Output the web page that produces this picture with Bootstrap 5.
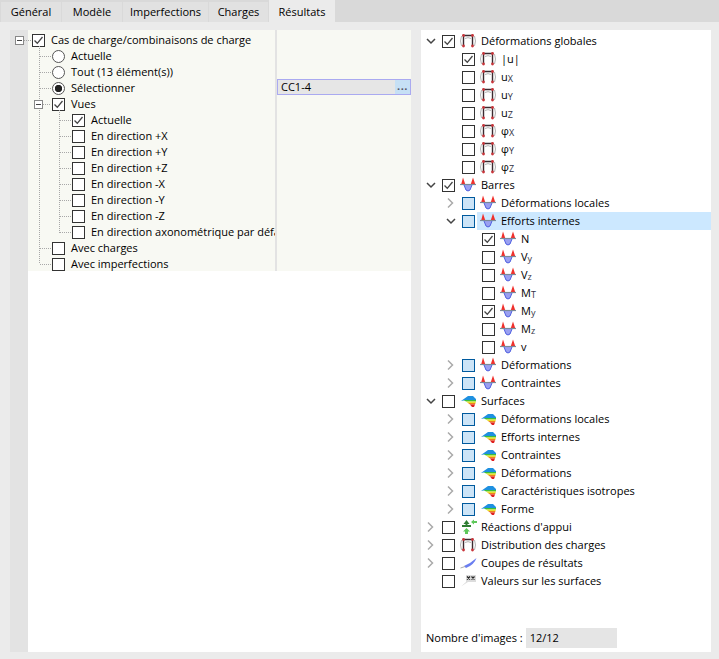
<!DOCTYPE html>
<html lang="fr">
<head>
<meta charset="UTF-8">
<title>Résultats</title>
<link href="https://cdn.jsdelivr.net/npm/bootstrap@5.3.3/dist/css/bootstrap.min.css" rel="stylesheet">
<style>
  html, body { height: 659px; overflow: hidden; }
  body { background: #ebebeb; color: #000; font: 11px/16px "Open Sans", "Noto Sans", sans-serif; }
  .tabbar { height: 22px; background: #d9d9d9; padding-left: 1px; gap: 1px; }
  .tabbar div { width: 60px; height: 20px; margin-top: 2px; line-height: 19px; text-align: center; background: #e1e1e1; }
  .tabbar div:nth-child(3) { width: 85px; }
  .tabbar div:nth-child(4) { width: 59px; }
  .tabbar div.active { width: 66px; height: 22px; margin-top: 0; line-height: 23px; background: #ebebeb; }
  .panels { height: 622px; margin: 8px 8px 0 10px; gap: 10px; }
  .left { width: 401px; background: #fff; position: relative; }
  .gutter { width: 18px; background: #e3e3e3; }
  .props { height: 241px; background: #f8f9f3; }
  .names { width: 249px; border-right: 2px solid #e3e3e3; overflow: hidden; padding-top: 2px; }
  .values { padding-top: 49px; flex: 1; }
  .combo { height: 16px; line-height: 14px; background: #e6e6e6; border: 1px solid #aaaaf0; padding-left: 3px; }
  .combo span { width: 15px; background: #c6e0f5; line-height: 11px; text-align: center; letter-spacing: .5px; color: #556; font-weight: 700; }
  .lines { position: absolute; left: 0; top: 0; pointer-events: none; }
  .row-l { height: 16px; white-space: nowrap; }
  .row-l .t { margin-left: 6px; }
  .l1 { padding-left: 4px; }
  .l2 { padding-left: 24px; }
  .l3 { padding-left: 44px; }
  .ck { width: 13px; height: 13px; border: 1px solid #333; background: #fff; flex: none; }
  .ck svg { display: block; }
  .ck.part { background: #cce4f7; border-color: #005a9e; }
  .rd { width: 13px; height: 13px; border: 1px solid #555; border-radius: 50%; background: #fff; flex: none; }
  .rd.on { background: radial-gradient(circle, #222 3.4px, #fff 4px); }
  .right { flex: 1; background: #fff; padding-top: 2px; position: relative; }
  .row-r { height: 18px; white-space: nowrap; }
  .row-r .sel { height: 18px; background: #cce8ff; margin-left: 2px; }
  .sel .ico { margin-left: 3px; }
  .arr { width: 14px; flex: none; margin-right: 2px; }
  .i0 { padding-left: 5px; }
  .i1 { padding-left: 25px; }
  .i2 { padding-left: 45px; }
  .ico { width: 18px; height: 16px; flex: none; margin: 0 3px 0 5px; }
  sub { position: static; font-size: 9px; vertical-align: -1px; color: #334; }
  .count { position: absolute; left: 5px; top: 598px; gap: 3px; }
  .count div { width: 91px; height: 20px; background: #e5e5e5; line-height: 20px; padding-left: 4px; }
</style>
</head>
<body>
<svg width="0" height="0" class="position-absolute">
  <defs>
    <symbol id="frame" viewBox="0 0 18 16">
      <path d="M1.500 3Q-.5 8 1.500 13M14.500 3Q16.500 8 14.500 13M5 5.500Q8 3.800 11 5.500" fill="none" stroke="#b5b5b5"/>
      <path d="M3.500 13V2.500H12.500V13" fill="none" stroke="#3a2a30" stroke-width="1.400"/>
      <circle cx="3.500" cy="2.500" r="1.400" fill="#c8343a"/><circle cx="12.500" cy="2.500" r="1.400" fill="#c8343a"/>
      <circle cx="3.500" cy="13" r="1.400" fill="#c8343a"/><circle cx="12.500" cy="13" r="1.400" fill="#c8343a"/>
    </symbol>
    <symbol id="bar" viewBox="0 0 18 16">
      <path d="M1 8 3 .5 5.500 8ZM10.500 8 13 .5 15.500 8Z" fill="#f0302c"/>
      <path d="M4 8H12L10 13Q8 15 6 13Z" fill="#9aa0f0"/>
      <path d="M4 8 6 13Q8 15 10 13L12 8" fill="none" stroke="#4f5fe0"/>
      <path d="M0 7.500H16" stroke="#7a8a9a" stroke-width="1.200"/>
    </symbol>
    <symbol id="surf" viewBox="0 0 18 16">
      <path d="M1 8 8 3H13L16 6V7H6Z" fill="#1e90e0"/>
      <path d="M3.500 7H16V8.500H6Z" fill="#3ac03a"/>
      <path d="M6 8.500H16L15.500 10H8Z" fill="#e8e02a"/>
      <path d="M8 10H15.500L15 11.500H10Z" fill="#ee8020"/>
      <path d="M10 11.500H15L14 14H12Z" fill="#e02020"/>
    </symbol>
  </defs>
</svg>

<div class="tabbar d-flex">
  <div>Général</div><div>Modèle</div><div>Imperfections</div><div>Charges</div><div class="active">Résultats</div>
</div>

<div class="panels d-flex">
  <div class="left d-flex">
    <div class="gutter"></div>
    <div class="flex-fill">
      <div class="props d-flex">
        <div class="names" id="names"></div>
        <div class="values">
          <div class="combo d-flex justify-content-between">CC1-4<span>...</span></div>
        </div>
      </div>
    </div>
    <svg class="lines" width="100" height="250" viewBox="0 0 100 250" shape-rendering="crispEdges">
      <path id="dots" fill="none" stroke="#a8a8a8" stroke-dasharray="1 1"/>
      <g fill="#fff" stroke="#888">
        <rect x="5.500" y="6.500" width="8" height="8"/>
        <rect x="24.500" y="70.500" width="8" height="8"/>
      </g>
      <path d="M7 10.500H12M26 74.500H31" stroke="#444"/>
    </svg>
  </div>
  <div class="right" id="tree">
    <div class="count d-flex align-items-center">Nombre d'images :<div>12/12</div></div>
  </div>
</div>

<script>
  const check = '<svg width="11" height="11" viewBox="0 0 11 11"><path d="M1.500 5.500 4.300 8.300 9.500 2" fill="none" stroke="#444" stroke-width="1.300"/></svg>';

  // left tree: level, kind (c check, C checked, r radio, R radio on), label
  const leftRows = [
    [1, 'C', 'Cas de charge/combinaisons de charge'],
    [2, 'r', 'Actuelle'], [2, 'r', 'Tout (13 élément(s))'], [2, 'R', 'Sélectionner'],
    [2, 'C', 'Vues'],
    [3, 'C', 'Actuelle'], [3, 'c', 'En direction +X'], [3, 'c', 'En direction +Y'], [3, 'c', 'En direction +Z'],
    [3, 'c', 'En direction -X'], [3, 'c', 'En direction -Y'], [3, 'c', 'En direction -Z'],
    [3, 'c', 'En direction axonométrique par défaut'],
    [2, 'c', 'Avec charges'], [2, 'c', 'Avec imperfections']
  ];
  document.getElementById('names').innerHTML = leftRows.map(([lv, kind, label]) => {
    const mark = kind === 'r' || kind === 'R'
      ? `<span class="rd${kind === 'R' ? ' on' : ''}"></span>`
      : `<span class="ck">${kind === 'C' ? check : ''}</span>`;
    return `<div class="row-l d-flex align-items-center l${lv}">${mark}<span class="t">${label}</span></div>`;
  }).join('');

  // dotted connectors of the left tree
  let d = 'M14 10.500H21M29.500 16V234M33 74.500H41M49.500 80V202.500';
  [26, 42, 58, 218, 234].forEach(y => { d += `M30 ${y + .5}H41`; });
  for (let y = 90; y <= 202; y += 16) d += `M50 ${y + .5}H61`;
  document.getElementById('dots').setAttribute('d', d);

  const chev = {
    d: '<svg class="arr" width="14" height="10" viewBox="0 0 14 10"><path d="M1 3 5 7 9 3" fill="none" stroke="#444" stroke-width="1.500"/></svg>',
    r: '<svg class="arr" width="14" height="10" viewBox="0 0 14 10"><path d="M2 .5 6.500 5 2 9.500" fill="none" stroke="#aaa" stroke-width="1.500"/></svg>',
    n: '<span class="arr"></span>'
  };
  const ico = id => `<svg class="ico"><use href="#${id}"/></svg>`;
  const react = '<svg class="ico" viewBox="0 0 18 16"><path d="M6.500 1 9.500 5H7.500V6H11V8H2V6H5.500V5H3.500Z" fill="#2f7d32"/><path d="M6.500 9 10 12.500H8V15H5V12.500H3Z" fill="#5ec85a"/><path d="M11 3 14 .5V2H17V4H14V5.500Z" fill="#5ec85a"/></svg>';
  const cut = '<svg class="ico" viewBox="0 0 18 16"><path d="M4 11Q11 8 16.500 3 14 10 6 13Z" fill="#6a7ef0"/><path d="M.5 13 5 11.500" stroke="#aaa"/></svg>';
  const vals = '<svg class="ico" viewBox="0 0 18 16"><path d="M1 13.500 6 9V2H16V9H8Z" fill="#dcdcdc"/><path d="M7 3.500 10 6.500M10 3.500 7 6.500M11.500 3.500 14.500 6.500M14.500 3.500 11.500 6.500" stroke="#222" stroke-width="1.200"/></svg>';

  // right tree: indent, chevron, checkbox state, icon, label, selected
  const treeRows = [
    [0, 'd', 'C', 'frame', 'Déformations globales'],
    [1, 'n', 'C', 'frame', '|u|'],
    [1, 'n', 'c', 'frame', 'u<sub>X</sub>'], [1, 'n', 'c', 'frame', 'u<sub>Y</sub>'], [1, 'n', 'c', 'frame', 'u<sub>Z</sub>'],
    [1, 'n', 'c', 'frame', 'φ<sub>X</sub>'], [1, 'n', 'c', 'frame', 'φ<sub>Y</sub>'], [1, 'n', 'c', 'frame', 'φ<sub>Z</sub>'],
    [0, 'd', 'C', 'bar', 'Barres'],
    [1, 'r', 'p', 'bar', 'Déformations locales'],
    [1, 'd', 'p', 'bar', 'Efforts internes', true],
    [2, 'n', 'C', 'bar', 'N'],
    [2, 'n', 'c', 'bar', 'V<sub>y</sub>'], [2, 'n', 'c', 'bar', 'V<sub>z</sub>'], [2, 'n', 'c', 'bar', 'M<sub>T</sub>'],
    [2, 'n', 'C', 'bar', 'M<sub>y</sub>'], [2, 'n', 'c', 'bar', 'M<sub>z</sub>'], [2, 'n', 'c', 'bar', 'v'],
    [1, 'r', 'p', 'bar', 'Déformations'], [1, 'r', 'p', 'bar', 'Contraintes'],
    [0, 'd', 'c', 'surf', 'Surfaces'],
    [1, 'r', 'p', 'surf', 'Déformations locales'], [1, 'r', 'p', 'surf', 'Efforts internes'],
    [1, 'r', 'p', 'surf', 'Contraintes'], [1, 'r', 'p', 'surf', 'Déformations'],
    [1, 'r', 'p', 'surf', 'Caractéristiques isotropes'], [1, 'r', 'p', 'surf', 'Forme'],
    [0, 'r', 'c', react, 'Réactions d\'appui'],
    [0, 'r', 'c', 'frame', 'Distribution des charges'],
    [0, 'r', 'c', cut, 'Coupes de résultats'],
    [0, 'n', 'c', vals, 'Valeurs sur les surfaces']
  ];
  const tree = document.getElementById('tree');
  tree.insertAdjacentHTML('afterbegin', treeRows.map(([ind, ch, st, icon, label, sel]) => {
    const box = `<span class="ck${st === 'p' ? ' part' : ''}">${st === 'C' ? check : ''}</span>`;
    const pic = icon.startsWith('<') ? icon : ico(icon);
    const body = sel
      ? `<div class="sel d-flex align-items-center flex-fill">${pic}<span>${label}</span></div>`
      : `${pic}<span>${label}</span>`;
    return `<div class="row-r d-flex align-items-center i${ind}">${chev[ch]}${box}${body}</div>`;
  }).join(''));
</script>
<script src="https://cdn.jsdelivr.net/npm/bootstrap@5.3.3/dist/js/bootstrap.bundle.min.js"></script>
</body>
</html>
